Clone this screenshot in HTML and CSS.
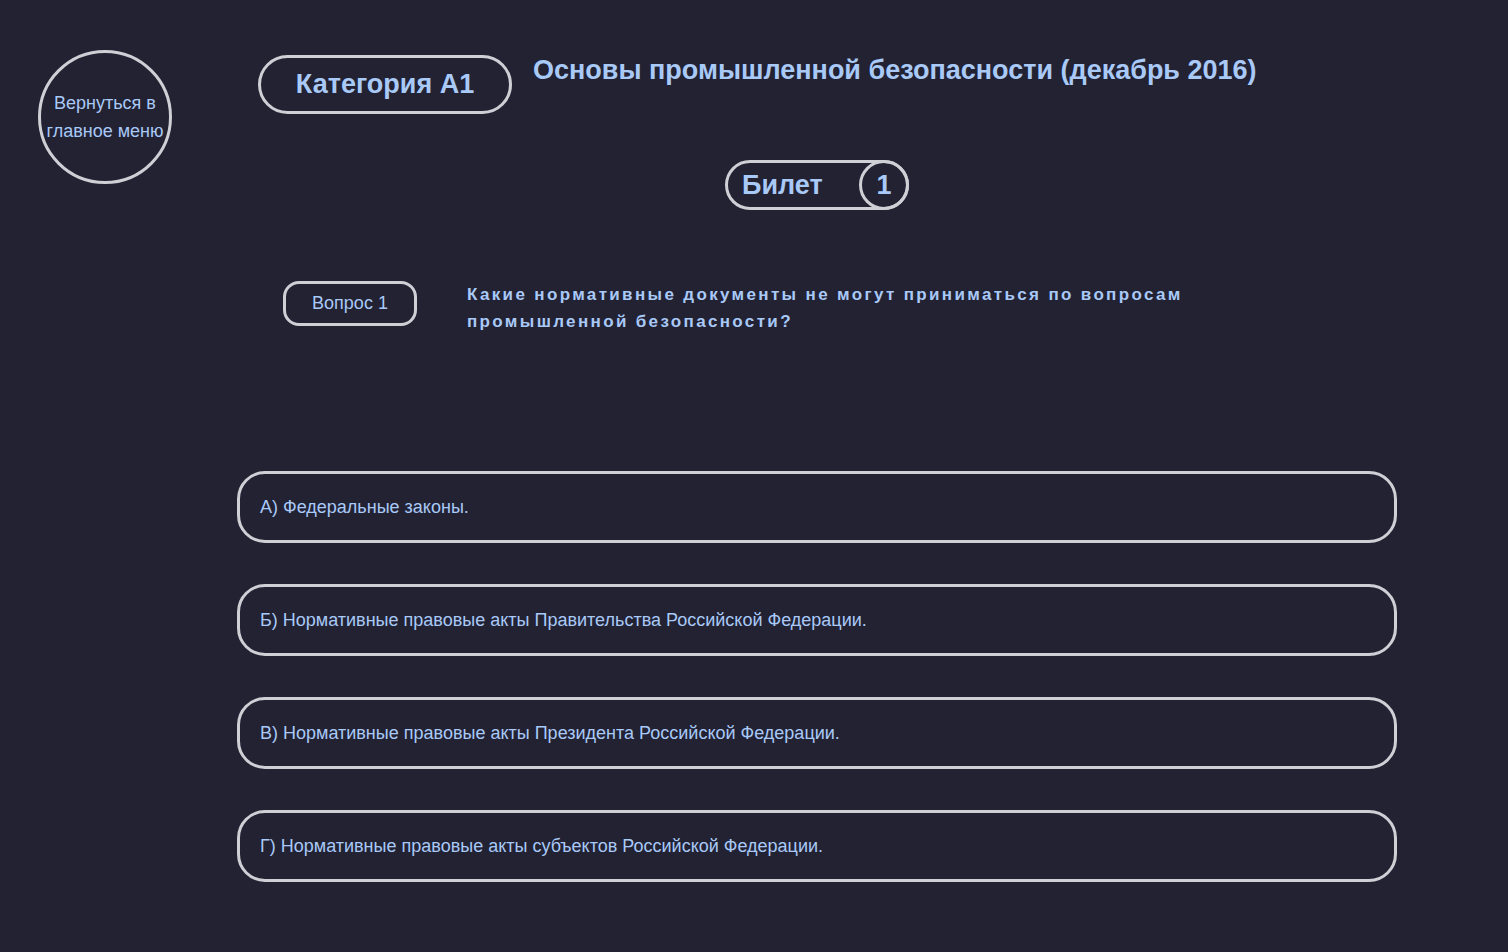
FILE: index.html
```html
<!DOCTYPE html>
<html lang="ru">
<head>
<meta charset="utf-8">
<title>Билет 1</title>
<link rel="stylesheet" href="styles.css">
</head>
<body>
<div class="page">
  <aside class="side">
    <a class="back" href="#">Вернуться в<br>главное меню</a>
  </aside>
  <main class="main">
    <header class="head">
      <div class="category">Категория А1</div>
      <h1 class="title">Основы промышленной безопасности (декабрь 2016)</h1>
    </header>
    <div class="ticket-row">
      <div class="ticket"><span class="ticket-label">Билет</span><span class="ticket-num">1</span></div>
    </div>
    <section class="question">
      <div class="q-pill">Вопрос 1</div>
      <p class="q-text">Какие нормативные документы не могут приниматься по вопросам промышленной безопасности?</p>
    </section>
    <ul class="answers">
      <li class="answer">А) Федеральные законы.</li>
      <li class="answer">Б) Нормативные правовые акты Правительства Российской Федерации.</li>
      <li class="answer">В) Нормативные правовые акты Президента Российской Федерации.</li>
      <li class="answer">Г) Нормативные правовые акты субъектов Российской Федерации.</li>
    </ul>
  </main>
</div>
</body>
</html>
```

FILE: styles.css
```css
html, body {
  margin: 0;
  padding: 0;
  background: #222233;
  height: 100%;
}
body {
  font-family: "Liberation Sans", Arial, sans-serif;
  color: #a9c9f7;
}
.page {
  display: flex;
  padding-top: 50px;
  min-height: 952px;
  box-sizing: border-box;
}
.side {
  width: 237px;
  flex: none;
  padding-left: 38px;
  box-sizing: border-box;
}
.back {
  display: flex;
  align-items: center;
  justify-content: center;
  width: 134px;
  height: 134px;
  box-sizing: border-box;
  border: 3px solid #cfcfd6;
  border-radius: 50%;
  color: #a9c9f7;
  text-decoration: none;
  text-align: center;
  font-size: 18px;
  line-height: 28px;
  white-space: nowrap;
}
.main {
  width: 1160px;
  flex: none;
}
.head {
  display: flex;
  align-items: flex-start;
  padding-left: 21px;
  gap: 21px;
}
.category {
  margin-top: 5px;
  width: 254px;
  height: 59px;
  box-sizing: border-box;
  border: 3px solid #cfcfd6;
  border-radius: 30px;
  display: flex;
  align-items: center;
  justify-content: center;
  font-weight: bold;
  font-size: 27px;
}
.title {
  margin: 0;
  padding-top: 5px;
  font-size: 27px;
  line-height: 30px;
  font-weight: bold;
}
.ticket-row {
  display: flex;
  justify-content: center;
  margin-top: 46px;
}
.ticket {
  display: flex;
  align-items: center;
  height: 50px;
  width: 184px;
  box-sizing: border-box;
  border: 3px solid #cfcfd6;
  border-radius: 25px;
  font-weight: bold;
  font-size: 27px;
}
.ticket-label {
  flex: 1;
  padding-left: 14px;
}
.ticket-num {
  width: 50px;
  height: 50px;
  margin: -3px -3px -3px 0;
  box-sizing: border-box;
  border: 3px solid #cfcfd6;
  border-radius: 50%;
  display: flex;
  align-items: center;
  justify-content: center;
}
.question {
  display: flex;
  align-items: flex-start;
  margin-top: 71px;
  padding-left: 46px;
  gap: 50px;
}
.q-pill {
  flex: none;
  width: 134px;
  height: 45px;
  box-sizing: border-box;
  border: 3px solid #cfcfd6;
  border-radius: 16px;
  display: flex;
  align-items: center;
  justify-content: center;
  font-size: 18px;
}
.q-text {
  margin: 0;
  width: 760px;
  font-weight: bold;
  font-size: 17px;
  line-height: 27px;
  letter-spacing: 2.35px;
}
.answers {
  list-style: none;
  margin: 136px 0 0;
  padding: 0;
  display: flex;
  flex-direction: column;
  gap: 41px;
}
.answer {
  height: 72px;
  box-sizing: border-box;
  border: 3px solid #cfcfd6;
  border-radius: 28px;
  display: flex;
  align-items: center;
  padding-left: 20px;
  font-size: 18px;
}
```
